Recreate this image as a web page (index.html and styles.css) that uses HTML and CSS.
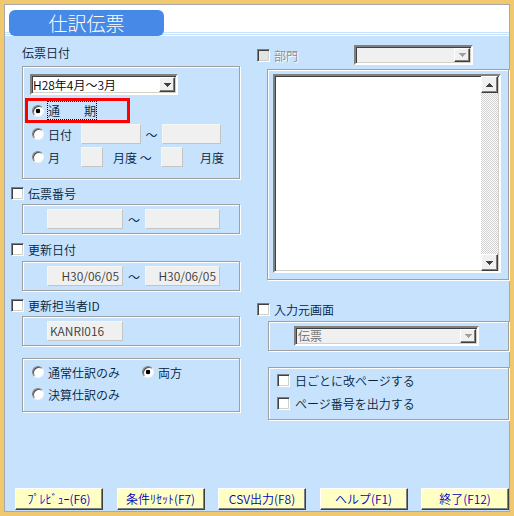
FILE: index.html
```html
<!DOCTYPE html>
<html lang="ja">
<head>
<meta charset="utf-8">
<title>仕訳伝票</title>
<link rel="stylesheet" href="styles.css">
</head>
<body>
<div class="window">
  <div class="frame">
    <header class="header">
      <div class="title">仕訳伝票</div>
    </header>
    <main class="main">
      <section class="col-left">
        <div class="caption">伝票日付</div>
        <div class="grp grp-date">
          <div class="sel sel-period">
            <span class="sel-text">H28年4月～3月</span>
            <span class="drop"><svg width="7" height="4" viewBox="0 0 7 4" shape-rendering="crispEdges"><path d="M0 0h7v1H0zM1 1h5v1H1zM2 2h3v1H2zM3 3h1v1H3z" fill="#404040"/></svg></span>
          </div>
          <div class="hl-row">
            <span class="radio on"></span>
            <span class="focus">通　　期</span>
          </div>
          <div class="opt-row">
            <span class="radio"></span>
            <span class="opt-lbl">日付</span>
            <span class="tb w60"></span>
            <span class="tilde">～</span>
            <span class="tb w59"></span>
          </div>
          <div class="opt-row month">
            <span class="radio"></span>
            <span class="opt-lbl">月</span>
            <span class="tb w22"></span>
            <span class="mid">月度 ～</span>
            <span class="tb w22"></span>
            <span class="end">月度</span>
          </div>
        </div>

        <div class="chk-row"><span class="chk"></span><span class="chk-lbl">伝票番号</span></div>
        <div class="grp grp-line">
          <span class="tb w76"></span>
          <span class="tilde2">～</span>
          <span class="tb w75"></span>
        </div>

        <div class="chk-row tall"><span class="chk"></span><span class="chk-lbl">更新日付</span></div>
        <div class="grp grp-line">
          <span class="tb w76 r">H30/06/05</span>
          <span class="tilde2">～</span>
          <span class="tb w75 r">H30/06/05</span>
        </div>

        <div class="chk-row"><span class="chk"></span><span class="chk-lbl">更新担当者ID</span></div>
        <div class="grp grp-line">
          <span class="tb w76 l">KANRI016</span>
        </div>

        <div class="grp grp-kind">
          <div class="rad-item"><span class="radio"></span><span class="rad-lbl">通常仕訳のみ</span></div>
          <div class="rad-item"><span class="radio on"></span><span class="rad-lbl">両方</span></div>
          <div class="rad-item"><span class="radio"></span><span class="rad-lbl">決算仕訳のみ</span></div>
        </div>
      </section>

      <section class="col-right">
        <div class="dept-row">
          <span class="chk dis"></span>
          <span class="dis-lbl">部門</span>
          <div class="sel dis dept">
            <span class="sel-text"></span>
            <span class="drop"><svg width="7" height="4" viewBox="0 0 7 4" shape-rendering="crispEdges"><path d="M0 0h7v1H0zM1 1h5v1H1zM2 2h3v1H2zM3 3h1v1H3z" fill="#a0a0a0"/></svg></span>
          </div>
        </div>
        <div class="grp grp-list">
          <div class="listbox">
            <div class="list-area"></div>
            <div class="vscroll">
              <span class="sbtn"><svg width="7" height="4" viewBox="0 0 7 4" shape-rendering="crispEdges"><path d="M3 0h1v1H3zM2 1h3v1H2zM1 2h5v1H1zM0 3h7v1H0z" fill="#404040"/></svg></span>
              <span class="sbtn"><svg width="7" height="4" viewBox="0 0 7 4" shape-rendering="crispEdges"><path d="M0 0h7v1H0zM1 1h5v1H1zM2 2h3v1H2zM3 3h1v1H3z" fill="#404040"/></svg></span>
            </div>
          </div>
        </div>

        <div class="src-row"><span class="chk"></span><span class="chk-lbl">入力元画面</span></div>
        <div class="grp grp-src">
          <div class="sel dis src">
            <span class="sel-text dim">伝票</span>
            <span class="drop"><svg width="7" height="4" viewBox="0 0 7 4" shape-rendering="crispEdges"><path d="M0 0h7v1H0zM1 1h5v1H1zM2 2h3v1H2zM3 3h1v1H3z" fill="#a0a0a0"/></svg></span>
          </div>
        </div>

        <div class="grp grp-opts">
          <div class="opt-chk"><span class="chk"></span><span class="chk-lbl">日ごとに改ページする</span></div>
          <div class="opt-chk"><span class="chk"></span><span class="chk-lbl">ページ番号を出力する</span></div>
        </div>
      </section>
    </main>
    <footer class="buttons">
      <button class="btn">ﾌﾟﾚﾋﾞｭｰ(F6)</button>
      <button class="btn">条件ﾘｾｯﾄ(F7)</button>
      <button class="btn">CSV出力(F8)</button>
      <button class="btn">ヘルプ(F1)</button>
      <button class="btn">終了(F12)</button>
    </footer>
  </div>
</div>
</body>
</html>
```

FILE: styles.css
```css
* { box-sizing: border-box; }
html, body { margin: 0; padding: 0; }
body {
  width: 514px;
  height: 516px;
  overflow: hidden;
  background: #f0c870;
  font-family: "Noto Sans CJK JP", "Noto Sans", sans-serif;
  font-size: 12px;
  font-weight: 350;
  color: #04233c;
}
.window {
  width: 514px;
  height: 516px;
  border: 4px solid #f0c870;
}
.frame {
  height: 100%;
  border: 1px solid #a9a9a9;
  background: #c6e2fc;
  display: flex;
  flex-direction: column;
}
.header {
  height: 31px;
  padding: 5px 0 0 4px;
  background:
    linear-gradient(#c6e2fc, #c6e2fc) 0 27px / 100% 1px no-repeat,
    linear-gradient(#c6e2fc, #c6e2fc) 0 29px / 100% 1px no-repeat,
    #fff;
}
.title {
  width: 155px;
  height: 26px;
  background: #4689e6;
  border-radius: 6px;
  color: #fff;
  font-size: 19px;
  font-weight: 300;
  line-height: 26px;
  text-align: center;
}
.main {
  flex: 1;
  display: grid;
  grid-template-columns: 229px 252px;
  column-gap: 17px;
  padding-left: 6px;
  align-content: start;
}
.caption {
  margin: 10px 0 6px 11px;
  line-height: 14px;
}
.grp {
  margin-left: 11px;
  width: 218px;
  border: 1px solid #a0a0a0;
  box-shadow: inset 1px 1px 0 #fff, 1px 1px 0 #fff;
}
.grp-date { height: 113px; }

/* select */
.sel {
  display: flex;
  height: 21px;
  background: #fff;
  border: 2px solid;
  border-color: #808080 #fff #fff #808080;
  box-shadow: inset 1px 1px 0 #404040, inset -1px -1px 0 #d4d0c8;
}
.sel-period { margin: 7px 0 0 7px; width: 148px; }
.sel-text {
  flex: 1;
  padding-left: 1px;
  line-height: 17px;
  color: #000;
  white-space: nowrap;
  overflow: hidden;
}
.sel-text.dim { color: #6d6d6d; padding-left: 2px; line-height: 16px; }
.drop {
  flex: none;
  width: 16px;
  margin: 1px 1px 1px 0;
  background: #f0f0f0;
  border: 1px solid;
  border-color: #fff #404040 #404040 #fff;
  box-shadow: inset -1px -1px 0 #808080;
  display: flex;
  align-items: center;
  justify-content: center;
}
.sel.dis { background: #f0f0f0; height: 20px; }
.dept { width: 119px; }

/* highlighted radio row */
.hl-row {
  margin: 3px 0 0 2px;
  width: 105px;
  height: 25px;
  border: 3px solid #ff0000;
  display: flex;
  align-items: center;
  padding-left: 4px;
}
.focus {
  margin-left: 3px;
  height: 19px;
  border: 1px dotted #000;
  line-height: 17px;
  white-space: pre;
}
.radio {
  flex: none;
  width: 12px;
  height: 12px;
  border-radius: 50%;
  background: #fff;
  border: 1px solid;
  border-color: #808080 #f4f4f4 #f4f4f4 #808080;
  box-shadow: inset 1px 1px 0 #505050;
}
.radio.on {
  background: radial-gradient(circle at 5px 5px, #000 0 2px, #fff 2.6px);
}
.opt-row {
  display: flex;
  align-items: center;
  height: 20px;
  padding-left: 9px;
  margin-top: 1px;
}
.opt-row.month { margin-top: 3px; }
.opt-lbl { width: 37px; padding-left: 4px; }
.tb {
  flex: none;
  height: 20px;
  background: #f0f0f0;
  border: 1px solid;
  border-color: #f6f6f6 #c4c4c4 #c4c4c4 #f6f6f6;
  color: #3a3a3a;
  line-height: 18px;
  white-space: nowrap;
}
.w22 { width: 22px; }
.w59 { width: 59px; }
.w60 { width: 60px; }
.w75 { width: 75px; }
.w76 { width: 76px; }
.tb.r { text-align: right; padding-right: 3px; }
.tb.l { padding-left: 2px; }
.tilde { width: 21px; text-align: center; }
.tilde2 { width: 22px; text-align: center; }
.mid { width: 58px; padding-left: 10px; white-space: nowrap; }
.end { padding-left: 17px; }

/* checkbox rows */
.chk-row {
  display: flex;
  align-items: flex-end;
  height: 25px;
  padding-bottom: 4px;
}
.chk-row.tall { height: 27px; padding-bottom: 5px; }
.chk {
  flex: none;
  width: 13px;
  height: 13px;
  background: #fff;
  border: 1px solid;
  border-color: #808080 #fff #fff #808080;
  box-shadow: inset 1px 1px 0 #404040, inset -1px -1px 0 #d4d0c8;
}
.chk.dis { background: #e4e4e4; }
.chk-lbl {
  margin-left: 4px;
  height: 13px;
  line-height: 13px;
  white-space: nowrap;
}
.grp-line {
  height: 30px;
  display: flex;
  align-items: center;
  padding-left: 24px;
}
.grp-kind {
  margin-top: 12px;
  height: 54px;
  padding: 2px 0 0 9px;
  display: grid;
  grid-template-columns: 110px auto;
  grid-auto-rows: 22px;
  align-items: center;
}
.rad-item { display: flex; align-items: center; }
.rad-lbl { margin-left: 4px; white-space: nowrap; }

/* right column */
.dept-row {
  margin-top: 9px;
  height: 20px;
  display: flex;
  align-items: center;
}
.dis-lbl {
  width: 84px;
  padding-left: 4px;
  color: #8c8c8c;
  text-shadow: 1px 1px 0 #fff;
}
.grp-list {
  margin: 4px 0 0 10px;
  width: 242px;
  height: 211px;
  padding: 4px 0 0 5px;
}
.listbox {
  width: 228px;
  height: 199px;
  display: flex;
  background: #fff;
  border: 2px solid;
  border-color: #808080 #fff #fff #808080;
  box-shadow: inset 1px 1px 0 #404040, inset -1px -1px 0 #d4d0c8;
}
.list-area { flex: 1; }
.vscroll {
  width: 17px;
  margin-right: 1px;
  display: flex;
  flex-direction: column;
  justify-content: space-between;
  background: conic-gradient(#cfcfcf 25%, #fff 0 50%, #cfcfcf 0 75%, #fff 0) 0 0 / 2px 2px;
}
.sbtn {
  height: 17px;
  background: #f0f0f0;
  border: 1px solid;
  border-color: #fff #404040 #404040 #fff;
  box-shadow: inset -1px -1px 0 #808080;
  display: flex;
  align-items: center;
  justify-content: center;
}
.src-row {
  height: 41px;
  display: flex;
  align-items: flex-end;
  padding-bottom: 5px;
}
.grp-src {
  width: 241px;
  height: 30px;
  display: flex;
  align-items: center;
  padding-left: 25px;
}
.src { width: 185px; }
.grp-opts {
  margin-top: 16px;
  width: 241px;
  height: 53px;
  padding: 1px 0 0 8px;
}
.grp-opts .chk-lbl { margin-left: 5px; }
.opt-chk {
  height: 23px;
  display: flex;
  align-items: center;
}

/* buttons */
.buttons {
  height: 22px;
  margin-bottom: 1px;
  padding-left: 10px;
  display: flex;
  justify-content: space-between;
}
.btn {
  width: 88px;
  height: 22px;
  padding: 0;
  background: #ffffc4;
  border: 1px solid;
  border-color: #fff #404040 #404040 #fff;
  box-shadow: inset -1px -1px 0 #808080;
  color: #0000c0;
  font-family: "Noto Sans CJK JP", "Noto Sans", sans-serif;
  font-size: 12px;
  font-weight: 350;
  line-height: 18px;
  text-align: center;
  white-space: nowrap;
}
```
